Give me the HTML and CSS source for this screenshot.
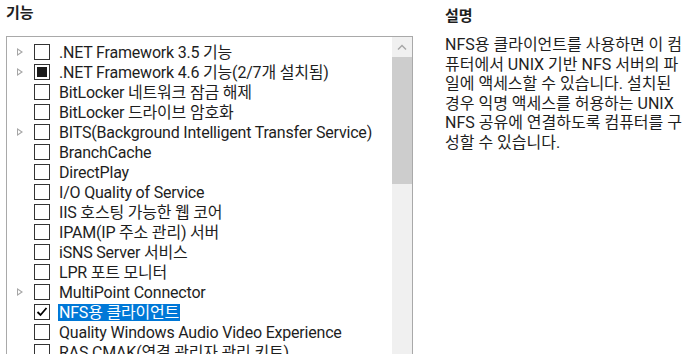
FILE: index.html
```html
<!DOCTYPE html>
<html lang="ko">
<head>
  <meta charset="UTF-8" />
  <title>역할 및 기능 추가 마법사 - 기능</title>
  <link rel="stylesheet" href="styles.css">
</head>
<body>
  <div id="page">
    <div id="featuresPane">
      <div class="pane-title">기능</div>

      <div id="listbox">
        <div id="featureList">
          <div class="row"><span class="expander"></span><span class="check"></span><span class="label">.NET Framework 3.5 기능</span></div>
          <div class="row"><span class="expander"></span><span class="check partial"></span><span class="label">.NET Framework 4.6 기능(2/7개 설치됨)</span></div>
          <div class="row"><span class="spacer"></span><span class="check"></span><span class="label">BitLocker 네트워크 잠금 해제</span></div>
          <div class="row"><span class="spacer"></span><span class="check"></span><span class="label">BitLocker 드라이브 암호화</span></div>
          <div class="row"><span class="expander"></span><span class="check"></span><span class="label">BITS(Background Intelligent Transfer Service)</span></div>
          <div class="row"><span class="spacer"></span><span class="check"></span><span class="label">BranchCache</span></div>
          <div class="row"><span class="spacer"></span><span class="check"></span><span class="label">DirectPlay</span></div>
          <div class="row"><span class="spacer"></span><span class="check"></span><span class="label">I/O Quality of Service</span></div>
          <div class="row"><span class="spacer"></span><span class="check"></span><span class="label">IIS 호스팅 가능한 웹 코어</span></div>
          <div class="row"><span class="spacer"></span><span class="check"></span><span class="label">IPAM(IP 주소 관리) 서버</span></div>
          <div class="row"><span class="spacer"></span><span class="check"></span><span class="label">iSNS Server 서비스</span></div>
          <div class="row"><span class="spacer"></span><span class="check"></span><span class="label">LPR 포트 모니터</span></div>
          <div class="row"><span class="expander"></span><span class="check"></span><span class="label">MultiPoint Connector</span></div>
          <div class="row selected">
            <span class="spacer"></span>
            <span class="check">
              <svg width="14" height="14" viewBox="0 0 14 14"><path d="M2.5 7 L5.5 10 L11.5 3" fill="none" stroke="#000" stroke-width="1.8"/></svg>
            </span>
            <span class="label">NFS용 클라이언트</span>
          </div>
          <div class="row"><span class="spacer"></span><span class="check"></span><span class="label">Quality Windows Audio Video Experience</span></div>
          <div class="row"><span class="spacer"></span><span class="check"></span><span class="label">RAS CMAK(연결 관리자 관리 키트)</span></div>
        </div>

        <div id="scrollbar">
          <div class="scroll-up">
            <svg width="10" height="6" viewBox="0 0 10 6"><path d="M1 5.5 L5 1.5 L9 5.5" fill="none" stroke="#a6a6a6" stroke-width="1.4"/></svg>
          </div>
          <div class="scroll-thumb"></div>
        </div>
      </div>
    </div>

    <div id="descriptionPane">
      <div class="pane-title bold">설명</div>
      <p class="description">NFS용 클라이언트를 사용하면 이 컴<br>퓨터에서 UNIX 기반 NFS 서버의 파<br>일에 액세스할 수 있습니다. 설치된<br>경우 익명 액세스를 허용하는 UNIX<br>NFS 공유에 연결하도록 컴퓨터를 구<br>성할 수 있습니다.</p>
    </div>
  </div>
</body>
</html>
```

FILE: styles.css
```css
html, body {
  height: 100%;
}

body {
  margin: 0;
  padding: 0;
  font-family: 'Segoe UI', Roboto, 'Noto Sans CJK KR', sans-serif;
  font-size: 16px;
  color: #1e1e1e;
  background: #fff;
  overflow: hidden;
}

#page {
  display: flex;
  padding: 3px 0 0 6px;
}

#featuresPane {
  width: 407px;
}

.pane-title {
  height: 33px;
  line-height: 20px;
  font-size: 15px;
  font-weight: 600;
  color: #1e1e1e;
}

.pane-title.bold {
  font-weight: bold;
  height: 29px;
  padding-top: 3px;
}

#listbox {
  display: flex;
  height: 340px;
  border: 1px solid #a9a9a9;
  background: #fff;
}

#featureList {
  flex: 1;
  padding-top: 5px;
}

.row {
  display: flex;
  align-items: center;
  height: 20px;
  padding-left: 10px;
  white-space: nowrap;
}

.expander,
.spacer {
  width: 17px;
  flex-shrink: 0;
}

.expander {
  height: 9px;
  position: relative;
}

/* hollow triangle for collapsed nodes */
.expander::before {
  content: "";
  position: absolute;
  left: 0;
  top: 0;
  border-left: 6px solid #a6a6a6;
  border-top: 4.5px solid transparent;
  border-bottom: 4.5px solid transparent;
}

.expander::after {
  content: "";
  position: absolute;
  left: 1px;
  top: 2px;
  border-left: 3px solid #fff;
  border-top: 2.5px solid transparent;
  border-bottom: 2.5px solid transparent;
}

.check {
  width: 14px;
  height: 14px;
  border: 1px solid #333;
  background: #fff;
  margin-right: 8px;
  flex-shrink: 0;
  display: flex;
  align-items: center;
  justify-content: center;
}

.check.partial::before {
  content: "";
  width: 10px;
  height: 10px;
  background: #1a1a1a;
}

.label {
  line-height: 17px;
  padding: 0 1px;
  letter-spacing: -0.2px;
}

.selected .label {
  background: #0078d7;
  color: #fff;
}

#scrollbar {
  width: 20px;
  background: #f0f0f0;
  flex-shrink: 0;
}

.scroll-up {
  height: 20px;
  display: flex;
  align-items: center;
  justify-content: center;
}

.scroll-thumb {
  height: 127px;
  background: #cdcdcd;
}

#descriptionPane {
  margin-left: 32px;
  width: 252px;
}

.description {
  margin: 0;
  line-height: 19.5px;
  white-space: nowrap;
}
```
